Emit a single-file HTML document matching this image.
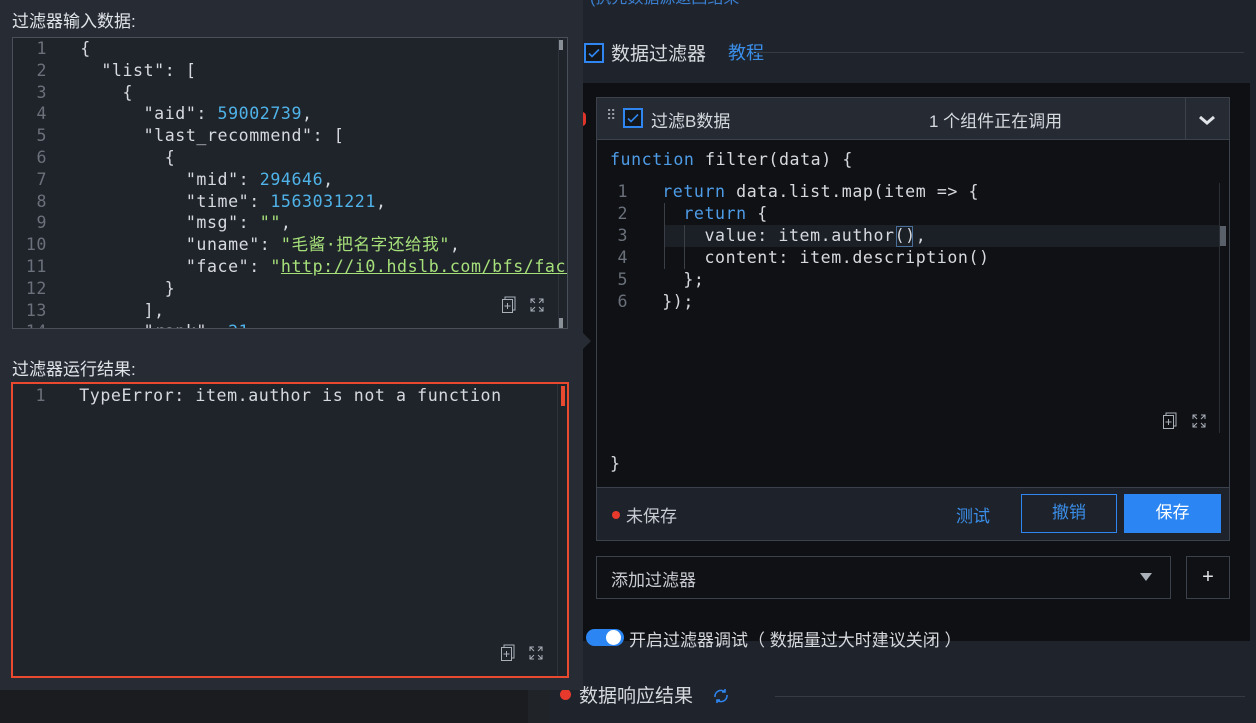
<!DOCTYPE html>
<html><head><meta charset="utf-8"><style>
*{box-sizing:border-box;margin:0;padding:0}
body{width:1256px;height:723px;overflow:hidden;background:#1f232b;position:relative;font-family:"Liberation Sans","Noto Sans CJK SC",sans-serif;color:#d0d4da}
.abs{position:absolute}
.mono{font-family:"DejaVu Sans Mono","Liberation Mono",monospace;font-size:16.6px;letter-spacing:0.57px;white-space:pre}
.ln{color:#6b717a;text-align:right;width:34px;display:inline-block;margin-right:-9px}
.rn{display:inline-block;width:28px;color:#6b717a;text-align:right;margin-right:-8px}
.b{color:#4fb3e8}.g{color:#a6e07a}.k{color:#4e9be6}
.cb{width:20px;height:20px;border:2px solid #2f86f0;background:#13161b}
.cb svg{display:block}
</style></head><body>
<div class="abs" style="left:0;top:690px;width:550px;height:33px;background:#1a1c20"></div>
<div class="abs" style="left:528px;top:690px;width:22px;height:33px;background:#202328"></div>
<div class="abs" style="left:590px;top:-16px;font-size:16px;color:#3a7fd0">(执先数据源返回结果</div>
<div class="abs cb" style="left:584px;top:43px"><svg width="16" height="16" viewBox="0 0 16 16"><path d="M3 8.5l3 3 7-7" stroke="#2f86f0" stroke-width="1.6" fill="none"/></svg></div>
<div class="abs" style="left:611px;top:39px;font-size:19px;color:#d6d9de">数据过滤器</div>
<div class="abs" style="left:728px;top:39px;font-size:18px;color:#3a8ee8">教程</div>
<div class="abs" style="left:756px;top:52px;width:488px;height:1px;background:#353a43"></div>
<div class="abs" style="left:582px;top:83px;width:668px;height:558px;background:#0e1013"></div>
<div class="abs" style="left:578px;top:112px;width:8px;height:14px;border-radius:4px;background:#e0352b"></div>
<div class="abs" style="left:596px;top:97px;width:634px;height:444px;border:1px solid #3c424c;background:#0f1115"></div>
<div class="abs" style="left:597px;top:98px;width:632px;height:42px;background:#252a33;border-bottom:1px solid #3c424c"></div>
<div class="abs" style="left:1185px;top:98px;width:1px;height:42px;background:#3c424c"></div>
<div class="abs" style="left:606px;top:107px;font-size:14px;color:#9aa0a8;letter-spacing:-1px">⠿</div>
<div class="abs cb" style="left:623px;top:108px"><svg width="16" height="16" viewBox="0 0 16 16"><path d="M3 8.5l3 3 7-7" stroke="#2f86f0" stroke-width="1.6" fill="none"/></svg></div>
<div class="abs" style="left:651px;top:107px;font-size:17px;color:#d6d9de">过滤B数据</div>
<div class="abs" style="left:929px;top:107px;font-size:17px;color:#d6d9de">1 个组件正在调用</div>
<svg class="abs" style="left:1198px;top:114px" width="18" height="12" viewBox="0 0 18 12"><path d="M2 3l7 6 7-6" stroke="#e0e3e8" stroke-width="3" fill="none"/></svg>
<div class="abs mono k" style="left:610px;top:150px">function <span style="color:#d6d9de">filter(data) {</span></div>
<div class="abs" style="left:664px;top:225px;width:556px;height:22px;background:#1b1f26"></div>
<div class="abs" style="left:664px;top:203px;width:1px;height:66px;background:#3a3f48"></div>
<div class="abs" style="left:684px;top:225px;width:1px;height:44px;background:#3a3f48"></div>
<div class="abs" style="left:1219px;top:183px;width:1px;height:250px;background:#2a2e35"></div>
<div class="abs" style="left:1220px;top:226px;width:6px;height:20px;background:#5a6069"></div>
<div class="abs" style="left:896px;top:226px;width:17px;height:21px;border:1px solid #4a6e9a"></div>
<div class="abs mono" style="left:600px;top:181px;line-height:22px;color:#d6d9de"><div><span class="rn">1</span>    <span class="k">return</span> data.list.map(item => {</div><div><span class="rn">2</span>      <span class="k">return</span> {</div><div><span class="rn">3</span>        value: item.author(),</div><div><span class="rn">4</span>        content: item.description()</div><div><span class="rn">5</span>      };</div><div><span class="rn">6</span>    });</div></div>
<div class="abs mono" style="left:610px;top:454px;color:#d6d9de">}</div>
<svg class="abs" style="left:1162px;top:412px" width="16" height="18" viewBox="0 0 16 18"><path d="M4 3V1h10v13h-2" stroke="#aab0b8" fill="none"/><rect x="1.5" y="3.5" width="10" height="13" stroke="#aab0b8" fill="none"/><path d="M6.5 7v6M3.5 10h6" stroke="#aab0b8"/></svg>
<svg class="abs" style="left:1191px;top:413px" width="16" height="16" viewBox="0 0 16 16"><path d="M2 6V2h4M10 2h4v4M14 10v4h-4M6 14H2v-4M2 2l4 4M14 2l-4 4M14 14l-4-4M2 14l4-4" stroke="#aab0b8" fill="none"/></svg>
<div class="abs" style="left:597px;top:487px;width:632px;height:53px;background:#1e222a;border-top:1px solid #3c424c"></div>
<div class="abs" style="left:612px;top:511px;width:8px;height:8px;border-radius:50%;background:#e8392d"></div>
<div class="abs" style="left:626px;top:502px;font-size:17px;color:#c8ccd2">未保存</div>
<div class="abs" style="left:956px;top:502px;font-size:17px;color:#3a8ee8">测试</div>
<div class="abs" style="left:1021px;top:494px;width:96px;height:39px;border:1px solid #2f86f0;color:#3a8ee8;font-size:17px;text-align:center;line-height:35px">撤销</div>
<div class="abs" style="left:1124px;top:494px;width:97px;height:39px;background:#2b85f2;color:#fff;font-size:17px;text-align:center;line-height:37px">保存</div>
<div class="abs" style="left:596px;top:556px;width:575px;height:43px;border:1px solid #3c424c;background:#0f1115"></div>
<div class="abs" style="left:611px;top:566px;font-size:17px;color:#c8ccd2">添加过滤器</div>
<svg class="abs" style="left:1139px;top:572px" width="14" height="10"><path d="M1 1h12L7 9z" fill="#aab0b8"/></svg>
<div class="abs" style="left:1186px;top:556px;width:44px;height:43px;border:1px solid #3c424c;background:#0f1115;color:#e0e3e8;text-align:center;line-height:40px;font-size:20px">+</div>
<div class="abs" style="left:586px;top:629px;width:38px;height:17px;border-radius:9px;background:#2b85f2"></div>
<div class="abs" style="left:606px;top:630px;width:15px;height:15px;border-radius:50%;background:#fff"></div>
<div class="abs" style="left:629px;top:626px;font-size:17px;color:#d6d9de">开启过滤器调试（ 数据量过大时建议关闭 ）</div>
<div class="abs" style="left:560px;top:689px;width:11px;height:11px;border-radius:50%;background:#e8392d"></div>
<div class="abs" style="left:579px;top:681px;font-size:19px;color:#d6d9de">数据响应结果</div>
<svg class="abs" style="left:712px;top:687px" width="18" height="18" viewBox="0 0 18 18"><path d="M3 10a6 6 0 0 1 10-5M15 8a6 6 0 0 1-10 5" stroke="#2f86f0" stroke-width="1.6" fill="none"/><path d="M13 2v3h-3M5 16v-3h3" stroke="#2f86f0" stroke-width="1.6" fill="none"/></svg>
<div class="abs" style="left:775px;top:696px;width:470px;height:1px;background:#353a43"></div>

<div class="abs" style="left:0;top:0;width:583px;height:690px;background:#272c34"></div>
<div class="abs" style="left:583px;top:333px;width:0;height:0;border-top:8px solid transparent;border-bottom:8px solid transparent;border-left:8px solid #272c34"></div>
<div class="abs" style="left:12px;top:7px;font-size:17px;color:#e0e3e8">过滤器输入数据:</div>
<div class="abs" style="left:12px;top:37px;width:556px;height:292px;border:1px solid #4a505a;background:#1f232a;overflow:hidden">
 <div class="abs" style="left:545px;top:0;width:1px;height:292px;background:#2f343c"></div>
 <div class="abs" style="left:546px;top:2px;width:4px;height:10px;background:#8a9098"></div>
 <div class="abs" style="left:546px;top:280px;width:4px;height:10px;background:#8a9098"></div>
 <div class="abs mono" style="left:0;top:0;line-height:21.8px;color:#d6d9de"><div><span class="ln">1</span>    {</div><div><span class="ln">2</span>      "list": [</div><div><span class="ln">3</span>        {</div><div><span class="ln">4</span>          "aid": <span class="b">59002739</span>,</div><div><span class="ln">5</span>          "last_recommend": [</div><div><span class="ln">6</span>            {</div><div><span class="ln">7</span>              "mid": <span class="b">294646</span>,</div><div><span class="ln">8</span>              "time": <span class="b">1563031221</span>,</div><div><span class="ln">9</span>              "msg": <span class="g">""</span>,</div><div><span class="ln">10</span>              "uname": <span class="g">"毛酱·把名字还给我"</span>,</div><div><span class="ln">11</span>              "face": <span class="g">"<u>http://i0.hdslb.com/bfs/face/abc</u></span></div><div><span class="ln">12</span>            }</div><div><span class="ln">13</span>          ],</div><div><span class="ln">14</span>          "rank": <span class="b">21</span></div></div>
 <svg class="abs" style="left:488px;top:258px" width="16" height="18" viewBox="0 0 16 18"><path d="M4 3V1h10v13h-2" stroke="#aab0b8" fill="none"/><rect x="1.5" y="3.5" width="10" height="13" stroke="#aab0b8" fill="none"/><path d="M6.5 7v6M3.5 10h6" stroke="#aab0b8"/></svg>
 <svg class="abs" style="left:516px;top:259px" width="16" height="16" viewBox="0 0 16 16"><path d="M2 6V2h4M10 2h4v4M14 10v4h-4M6 14H2v-4M2 2l4 4M14 2l-4 4M14 14l-4-4M2 14l4-4" stroke="#aab0b8" fill="none"/></svg>
</div>
<div class="abs" style="left:12px;top:355px;font-size:17px;color:#e0e3e8">过滤器运行结果:</div>
<div class="abs" style="left:11px;top:382px;width:558px;height:296px;border:2px solid #e8492f;background:#1f232a">
 <div class="abs" style="left:544px;top:0;width:1px;height:292px;background:#2f343c"></div>
 <div class="abs" style="left:548px;top:2px;width:4px;height:20px;background:#e8492f"></div>
 <div class="abs mono" style="left:-1px;top:2px;color:#d6d9de"><span class="ln">1</span>    TypeError: item.author is not a function</div>
 <svg class="abs" style="left:487px;top:260px" width="16" height="18" viewBox="0 0 16 18"><path d="M4 3V1h10v13h-2" stroke="#aab0b8" fill="none"/><rect x="1.5" y="3.5" width="10" height="13" stroke="#aab0b8" fill="none"/><path d="M6.5 7v6M3.5 10h6" stroke="#aab0b8"/></svg>
 <svg class="abs" style="left:515px;top:261px" width="16" height="16" viewBox="0 0 16 16"><path d="M2 6V2h4M10 2h4v4M14 10v4h-4M6 14H2v-4M2 2l4 4M14 2l-4 4M14 14l-4-4M2 14l4-4" stroke="#aab0b8" fill="none"/></svg>
</div>
</body></html>
